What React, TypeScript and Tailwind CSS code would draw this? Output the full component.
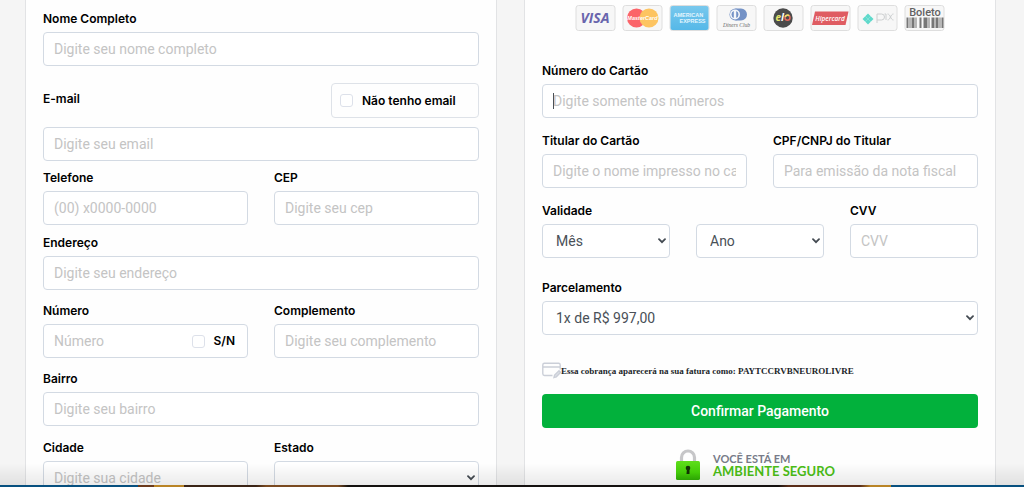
import { useId } from 'react'
import type { ReactNode } from 'react'

const fieldClass =
  "block h-[34px] w-full min-w-0 rounded border border-[#d3dae3] bg-white px-[10px] font-['Roboto',sans-serif] text-sm text-[#495057] placeholder:text-[#c4c4c4] focus:outline-none"

function Label({ htmlFor, children }: { htmlFor?: string; children: ReactNode }) {
  return (
    <label htmlFor={htmlFor} className="mb-[3px] block text-xs leading-5 font-semibold text-black">
      {children}
    </label>
  )
}

function TextField({ label, placeholder }: { label: string; placeholder: string }) {
  const id = useId()
  return (
    <div className="min-w-0">
      <Label htmlFor={id}>{label}</Label>
      <input id={id} type="text" placeholder={placeholder} className={fieldClass} />
    </div>
  )
}

function Select({ id, name, options }: { id?: string; name?: string; options: string[] }) {
  return (
    <div className="relative">
      <select
        id={id}
        aria-label={name}
        className="block h-[34px] w-full appearance-none rounded border border-[#d3dae3] bg-white pr-6 pl-[13px] font-['Roboto',sans-serif] text-sm text-[#495057] focus:outline-none"
      >
        {options.map((option) => (
          <option key={option}>{option}</option>
        ))}
      </select>
      <svg viewBox="0 0 8 6" className="pointer-events-none absolute top-[14px] right-[4px] h-[6px] w-[8px]">
        <path d="M1 1.2 4 4.2 7 1.2" fill="none" stroke="#444b52" strokeWidth="1.8" strokeLinecap="round" />
      </svg>
    </div>
  )
}

function Checkbox({ label }: { label: string }) {
  return (
    <label className="flex shrink-0 items-center gap-[9px] text-xs leading-5 font-semibold text-black">
      <input type="checkbox" className="h-[13px] w-[13px] appearance-none rounded-[3px] border border-[#dde1ea] bg-white" />
      {label}
    </label>
  )
}

function Card({ children, className }: { children: ReactNode; className: string }) {
  return <section className={`min-w-0 flex-1 border-x border-[#e2e3e5] bg-[#fefefe] px-[17px] ${className}`}>{children}</section>
}

function Badge({ name, children }: { name: string; children: ReactNode }) {
  return (
    <svg viewBox="0 0 40 26" role="img" aria-label={name} className="h-[26px] w-[41px]">
      <rect x="0.5" y="0.5" width="39" height="25" rx="2.5" fill="#f7f7f7" stroke="#dedede" />
      {children}
    </svg>
  )
}

function PaymentMethods() {
  return (
    <div className="flex justify-center gap-[6px]">
      <Badge name="Visa">
        <text x="19.5" y="18" textAnchor="middle" fontFamily="Open Sans, sans-serif" fontSize="14" fontWeight="700" fontStyle="italic" fill="#6965ad">
          VISA
        </text>
      </Badge>
      <Badge name="MasterCard">
        <circle cx="14" cy="13" r="9.500" fill="#fb6469" />
        <circle cx="26.500" cy="13" r="9.500" fill="#fdc461" />
        <text x="20" y="15" textAnchor="middle" fontFamily="Liberation Sans, sans-serif" fontSize="5.500" fontWeight="700" fontStyle="italic" fill="#fff">
          MasterCard
        </text>
      </Badge>
      <Badge name="American Express">
        <defs>
          <linearGradient id="amex" x1="0" y1="0" x2="0" y2="1">
            <stop offset="0" stopColor="#78c8ed" />
            <stop offset="1" stopColor="#55b8e8" />
          </linearGradient>
        </defs>
        <rect x="1" y="1" width="38" height="24" rx="2" fill="url(#amex)" />
        <g fontFamily="Liberation Sans, sans-serif" fontSize="5.500" fontWeight="700" fill="#e4f5fd">
          <text x="4" y="11.500">AMERICAN</text>
          <text x="10" y="18">EXPRESS</text>
        </g>
      </Badge>
      <Badge name="Diners Club">
        <path d="M19 3.500h5.500a6 6 0 0 1 0 12h-5.500z" fill="#7492c6" />
        <circle cx="19" cy="9.500" r="6" fill="#7492c6" />
        <circle cx="18.500" cy="9.500" r="5" fill="#f4f6fa" />
        <path d="M17.300 6a3.800 3.800 0 0 0 0 7zM19.700 6a3.800 3.800 0 0 1 0 7z" fill="#7492c6" />
        <text x="20" y="22" textAnchor="middle" fontFamily="Liberation Serif, serif" fontSize="5.500" fontStyle="italic" fill="#666">
          Diners Club
        </text>
      </Badge>
      <Badge name="Elo">
        <circle cx="19.500" cy="13" r="9.700" fill="#4b4b4b" />
        <text x="12" y="15.500" fontFamily="Open Sans, sans-serif" fontSize="10" fontWeight="700" fontStyle="italic" fill="#fff">
          <tspan fill="#e9e66a">e</tspan>
          <tspan>l</tspan>
        </text>
        <circle cx="24" cy="12.700" r="2.500" fill="none" stroke="#e9695f" strokeWidth="1.500" />
        <path d="M21.700 12a2.500 2.500 0 0 1 4-1.300" fill="none" stroke="#e9e66a" strokeWidth="1.500" />
      </Badge>
      <Badge name="Hipercard">
        <path d="M4.500 6.500h33.500l-3 13.500h-33.500z" fill="#df5c62" />
        <text x="19.500" y="15.500" textAnchor="middle" fontFamily="Open Sans, sans-serif" fontSize="6.500" fontWeight="600" fontStyle="italic" fill="#fff">
          Hipercard
        </text>
      </Badge>
      <Badge name="Pix">
        <path d="M10.500 8.500 16 14l-5.500 5.500L5 14z" fill="#5fd9cb" />
        <path d="m7.500 11 3 3 3-3M7.500 17l3-3 3 3" fill="none" stroke="#a5ebe3" strokeWidth="0.500" />
        <path d="M19.500 18v-9h4.500a3 3 0 0 1 0 6h-4.500M27 9h1.500v6M30 9c3 0 3 6 6 6M36 9c-3 0-3 6-6 6" fill="none" stroke="#cccfd0" />
      </Badge>
      <Badge name="Boleto">
        <text x="20.500" y="10.500" textAnchor="middle" fontFamily="Roboto, sans-serif" fontSize="11" fontWeight="500" fill="#626262">
          Boleto
        </text>
        <path
          d="M2 12.500h2v10.500H2zM5 12.500h1v10.500H5zM7 12.500h3v10.500H7zM11 12.500h1v10.500h-1zM15 12.500h2v10.500h-2zM19 12.500h4v10.500h-4zM24 12.500h1v10.500h-1zM27 12.500h3v10.500h-3zM31 12.500h3v10.500h-3zM35 12.500h1v10.500h-1zM37 12.500h2v10.500h-2z"
          fill="#777"
        />
      </Badge>
    </div>
  )
}

function CustomerCard() {
  const emailId = useId()
  const numberId = useId()
  const stateId = useId()

  return (
    <Card className="pt-[9px]">
      <TextField label="Nome Completo" placeholder="Digite seu nome completo" />

      <div className="mt-[17px] flex items-start justify-between pb-[9px]">
        <div className="pt-[6px]">
          <Label htmlFor={emailId}>E-mail</Label>
        </div>
        <div className="flex h-[35px] w-[148px] items-center rounded border border-[#dee2e8] px-[8px]">
          <Checkbox label="Não tenho email" />
        </div>
      </div>
      <input id={emailId} type="email" placeholder="Digite seu email" className={fieldClass} />

      <div className="mt-[7px] grid grid-cols-2 gap-[26px]">
        <TextField label="Telefone" placeholder="(00) x0000-0000" />
        <TextField label="CEP" placeholder="Digite seu cep" />
      </div>

      <div className="mt-[8px]">
        <TextField label="Endereço" placeholder="Digite seu endereço" />
      </div>

      <div className="mt-[11px] grid grid-cols-2 gap-[26px]">
        <div className="min-w-0">
          <Label htmlFor={numberId}>Número</Label>
          <div className="flex h-[34px] items-center rounded border border-[#d3dae3] bg-white pr-[12px] pl-[10px]">
            <input
              id={numberId}
              type="text"
              placeholder="Número"
              className="min-w-0 flex-1 font-['Roboto',sans-serif] text-sm text-[#495057] placeholder:text-[#c4c4c4] focus:outline-none"
            />
            <Checkbox label="S/N" />
          </div>
        </div>
        <TextField label="Complemento" placeholder="Digite seu complemento" />
      </div>

      <div className="mt-[11px]">
        <TextField label="Bairro" placeholder="Digite seu bairro" />
      </div>

      <div className="mt-[12px] grid grid-cols-2 gap-[26px] pb-6">
        <TextField label="Cidade" placeholder="Digite sua cidade" />
        <div className="min-w-0">
          <Label htmlFor={stateId}>Estado</Label>
          <Select id={stateId} options={['', 'MG', 'RJ', 'SP']} />
        </div>
      </div>
    </Card>
  )
}

function SecureSeal() {
  return (
    <div className="mt-[21px] flex items-center justify-center gap-[12px] pr-[10px]">
      <svg viewBox="0 0 26 32" className="h-[32px] w-[26px]" aria-hidden="true">
        <defs>
          <linearGradient id="lock" x1="0" y1="0" x2="0" y2="1">
            <stop offset="0" stopColor="#5fdc1c" />
            <stop offset="0.600" stopColor="#46d309" />
            <stop offset="1" stopColor="#2fae05" />
          </linearGradient>
        </defs>
        <path d="M6.500 14V8.500a6.500 6.500 0 0 1 13 0v5.500" fill="none" stroke="#c6c6c8" strokeWidth="3.200" />
        <rect x="1" y="12" width="24" height="19" rx="1.500" fill="url(#lock)" />
        <circle cx="13" cy="19" r="2.300" fill="#143307" />
        <path d="M12 19h2.500v6h-3z" fill="#143307" />
      </svg>
      <p className="font-['Lato',sans-serif] font-bold">
        <span className="block text-[11px] leading-3 text-[#777b88]">VOCÊ ESTÁ EM</span>
        <span className="block text-[13px] leading-3 text-[#4cbf16]">AMBIENTE SEGURO</span>
      </p>
    </div>
  )
}

function PaymentCard() {
  const cardId = useId()
  const monthId = useId()
  const installmentsId = useId()

  return (
    <Card className="pt-[5px]">
      <PaymentMethods />

      <div className="mt-[30px]">
        <Label htmlFor={cardId}>Número do Cartão</Label>
        <div className="relative">
          <input id={cardId} type="text" placeholder="Digite somente os números" className={fieldClass} />
          <span className="absolute top-[9px] left-[11px] h-[16px] w-px bg-[#495057]" />
        </div>
      </div>

      <div className="mt-[13px] grid grid-cols-2 gap-[26px]">
        <TextField label="Titular do Cartão" placeholder="Digite o nome impresso no cartão" />
        <TextField label="CPF/CNPJ do Titular" placeholder="Para emissão da nota fiscal" />
      </div>

      <div className="mt-[13px] grid grid-cols-3 items-end gap-[26px]">
        <div>
          <Label htmlFor={monthId}>Validade</Label>
          <Select id={monthId} options={['Mês', '01', '02', '03']} />
        </div>
        <Select name="Ano" options={['Ano', '2024', '2025', '2026']} />
        <TextField label="CVV" placeholder="CVV" />
      </div>

      <div className="mt-[20px]">
        <Label htmlFor={installmentsId}>Parcelamento</Label>
        <Select id={installmentsId} options={['1x de R$ 997,00']} />
      </div>

      <div className="mt-[27px] flex items-center">
        <svg viewBox="0 0 19 17" className="h-[17px] w-[19px] shrink-0" fill="none" stroke="#cbcfd8" strokeWidth="1.400" aria-hidden="true">
          <path d="M10.500 13.500H2.500A1.700 1.700 0 0 1 .8 11.800V3A1.700 1.700 0 0 1 2.500 1.300h14A1.700 1.700 0 0 1 18.200 3v4.500M1 5h17" />
          <path d="m12 15.500.6-2.500 4.400-4.200 1.600 1.600-4.300 4.400z" fill="#dde0e6" />
        </svg>
        <p className="font-['Liberation_Serif',serif] text-[9px] leading-4 font-bold text-[#212529]">
          Essa cobrança aparecerá na sua fatura como: PAYTCCRVBNEUROLIVRE
        </p>
      </div>

      <button
        type="button"
        className="mt-[15px] block h-[34px] w-full rounded bg-[#02b13c] font-['Roboto',sans-serif] text-sm font-medium text-white"
      >
        Confirmar Pagamento
      </button>

      <SecureSeal />
    </Card>
  )
}

export default function App() {
  return (
    <div className="h-screen overflow-y-auto bg-[#f5f5f5] font-['Inter',sans-serif] [scrollbar-width:none]">
      <main className="flex gap-[27px] pr-[28px] pl-[25px]">
        <CustomerCard />
        <PaymentCard />
      </main>
      <div className="pointer-events-none fixed inset-x-0 bottom-0">
        <div className="h-[22px] bg-linear-to-b from-transparent to-black/8" />
        <div className="h-[2px] bg-[linear-gradient(90deg,#07507f_0_13.5%,#6b3a1c_13.5%_15%,#b98426_15%_18%,#3a2416_18%_25%,#7a4a20_26%_33%,#14110f_34%_76%,#5a2d18_77%_84%,#b98426_85%_87%,#07507f_87%)]" />
      </div>
    </div>
  )
}
